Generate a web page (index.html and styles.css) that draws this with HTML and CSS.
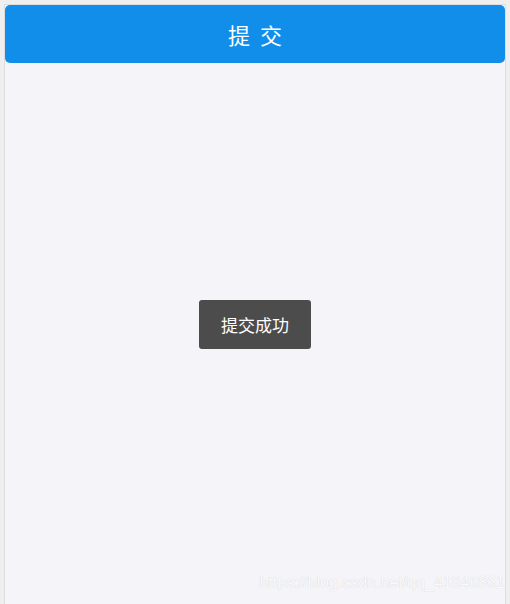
FILE: index.html
```html
<!DOCTYPE html>
<html lang="zh-CN">
<head>
<meta charset="utf-8">
<title>提交</title>
<link rel="stylesheet" href="styles.css">
</head>
<body>
<div class="frame">
  <button class="submit-btn" type="button">提交</button>
  <div class="content"></div>
  <div class="toast">提交成功</div>
  <div class="watermark">https://blog.csdn.net/qq_41846861</div>
</div>
</body>
</html>
```

FILE: styles.css
```css
html, body {
  margin: 0;
  padding: 0;
  background: #efefef;
  width: 510px;
  height: 604px;
  overflow: hidden;
}

.frame {
  position: relative;
  margin: 4px 4px 0 4px;
  height: 620px;
  border: 1px solid #dedede;
  background: #f5f5f9;
  display: flex;
  flex-direction: column;
  font-family: "Noto Sans CJK SC", "Liberation Sans", sans-serif;
}

.submit-btn {
  display: block;
  width: 100%;
  height: 58px;
  margin: 0;
  border: none;
  border-radius: 5px;
  background: #108ee9;
  color: #ffffff;
  font-family: "Noto Sans CJK SC", sans-serif;
  font-size: 22px;
  letter-spacing: 10px;
  text-indent: 10px;
  line-height: 58px;
  padding: 0;
  cursor: pointer;
}

.content {
  flex: 1;
}

.toast {
  position: absolute;
  left: 194px;
  top: 295px;
  width: 112px;
  height: 49px;
  box-sizing: border-box;
  border-radius: 3px;
  background: #4c4c4c;
  color: #ffffff;
  font-family: "Noto Sans CJK SC", sans-serif;
  font-size: 17px;
  line-height: 49px;
  text-align: center;
}

.watermark {
  position: absolute;
  right: 0;
  top: 569px;
  font-family: "Liberation Sans", Arial, sans-serif;
  font-size: 16px;
  color: #fafafc;
  text-shadow: 0 0 1px #c8c8cc;
  white-space: nowrap;
}
```
